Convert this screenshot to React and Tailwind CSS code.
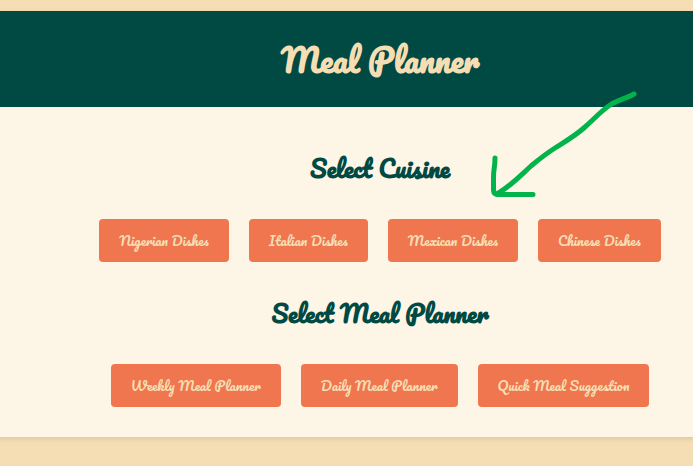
const script = "font-['Pacifico',cursive] whitespace-nowrap";

function Choice({ label }) {
  return (
    <button
      type="button"
      className={`${script} rounded bg-[#f0764f] px-5 py-2.5 text-[13.3333px] leading-[23px] text-[#f5deb3]`}
    >
      {label}
    </button>
  );
}

function Section({ title, items }) {
  return (
    <section className="flex flex-col items-center">
      <h2 className={`${script} text-2xl leading-[42px] font-bold text-[#004a43]`}>{title}</h2>
      <div className="mt-[30px] flex gap-5">
        {items.map((label) => (
          <Choice key={label} label={label} />
        ))}
      </div>
    </section>
  );
}

const cuisines = ["Nigerian Dishes", "Italian Dishes", "Mexican Dishes", "Chinese Dishes"];
const planners = ["Weekly Meal Planner", "Daily Meal Planner", "Quick Meal Suggestion"];

export default function App() {
  return (
    <div className="relative h-[466px] w-full overflow-hidden bg-[#f5deb3] pt-[11px]">
      <div className="-ml-5 w-[800px] bg-[#fdf5e6] shadow-[0_2px_5px_rgba(0,0,0,0.1)]">
        <header className="flex h-24 items-center justify-center bg-[#004a43]">
          <h1 className={`${script} text-[32px] leading-[56px] font-bold text-[#f5deb3]`}>Meal Planner</h1>
        </header>
        <main className="flex h-[330px] flex-col gap-[30px] pt-10">
          <Section title="Select Cuisine" items={cuisines} />
          <Section title="Select Meal Planner" items={planners} />
        </main>
      </div>
      <svg
        className="absolute top-[80px] left-[480px]"
        width="180"
        height="130"
        fill="none"
        stroke="#00b34a"
        strokeWidth="5"
        strokeLinecap="round"
        strokeLinejoin="round"
      >
        <path d="M154 14C147 18 138 20 130 25C121 31 113 40 105 47C95 56 86 61 75 68C64 75 57 81 51 86C42 94 32 105 17 114" />
        <path d="M15 78C15 88 13.500 88 13.500 97V110Q13.500 114.500 18 114.500H53" />
      </svg>
    </div>
  );
}
